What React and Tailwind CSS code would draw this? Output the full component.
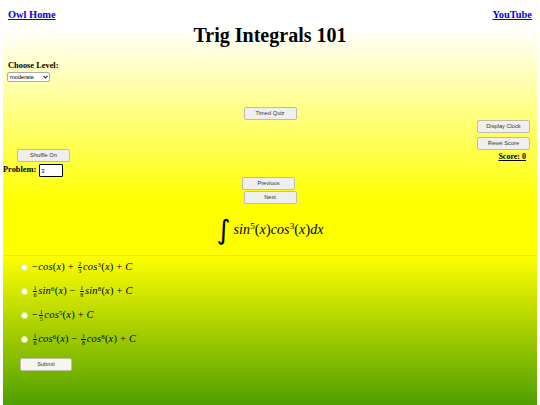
const sansFont = "font-['Liberation_Sans',sans-serif]"

function Btn({ className = '', children }) {
  return (
    <button className={`h-[11px] box-content border border-[#bdbda8] rounded-[2px] bg-[#efefef] text-[5.7px] leading-[11px] text-[#333] ${sansFont} ${className}`}>
      {children}
    </button>
  )
}

function Frac({ n, d }) {
  return (
    <span className="inline-flex flex-col items-center align-middle text-[6px] leading-[6px] mx-[1px]">
      <span className="border-b-[0.5px] border-black px-[0.5px]">{n}</span>
      <span>{d}</span>
    </span>
  )
}

function Fn({ name, sup }) {
  return (
    <>
      <i>{name}</i>
      <sup className="text-[0.65em]">{sup}</sup>
      (<i>x</i>)
    </>
  )
}

function Choice({ children }) {
  return (
    <div className="h-[24px] flex items-center gap-[4px]">
      <span className="w-[5px] h-[5px] rounded-full bg-white border border-[#e4e4a0] box-content"></span>
      <span className="text-[10.5px] tracking-[0.2px] text-black whitespace-nowrap">{children}</span>
    </div>
  )
}

export default function App() {
  return (
    <div className="w-[540px] h-[405px] overflow-hidden bg-white px-[3px]">
      <div className="h-full font-['Liberation_Serif',serif] text-black bg-[linear-gradient(180deg,#ffffff_0%,#ffffff_7%,#ffff00_50%,#ffff00_63%,#4f9f00_100%)]">
        <div className="flex justify-between pt-[9px] pl-[5px] pr-[5px] text-[10.4px] font-bold leading-[11px]">
          <a className="underline text-[#0000ee]" href="#">Owl Home</a>
          <a className="underline text-[#0000ee]" href="#">YouTube</a>
        </div>
        <h1 className="text-center text-[20px] font-bold leading-[28px] mt-[1px]">Trig Integrals 101</h1>

        <div className="pl-[5px] mt-[12px]">
          <div className="text-[8.4px] font-bold leading-[10px]">Choose Level:</div>
          <div className="relative w-[43px] h-[10px] mt-[1px] -ml-[1px]">
            <select className={`block w-full h-full appearance-none pl-[2px] text-[5.7px] bg-white border border-[#aaa] rounded-[2px] ${sansFont}`} defaultValue="moderate">
              <option>moderate</option>
            </select>
            <svg className="absolute right-[2px] top-[3px] w-[5px] h-[4px]" viewBox="0 0 10 8" fill="none" stroke="#333" strokeWidth="2.2">
              <path d="M1 2l4 4 4-4" />
            </svg>
          </div>
        </div>

        <div className="flex justify-center mt-[25px]">
          <Btn className="w-[51px]">Timed Quiz</Btn>
        </div>
        <div className="flex flex-col items-end pr-[7px] gap-[4px]">
          <Btn className="w-[51px]">Display Clock</Btn>
          <Btn className="w-[51px]">Reset Score</Btn>
        </div>

        <div className="flex -mt-[1px]">
          <div className="pl-[14px]">
            <Btn className="w-[51px] block">Shuffle On</Btn>
          </div>
          <div className="ml-auto pr-[11px] pt-[3px] text-[8px] font-bold underline leading-[10px]">Score: 0</div>
        </div>

        <div className="flex items-start text-[8.4px] font-bold mt-[2px]">
          <span className="leading-[12px]">Problem:</span>
          <input className={`ml-[3px] w-[24px] h-[13px] border border-black rounded-[1px] bg-white text-[5.7px] px-[1px] font-normal ${sansFont}`} defaultValue="3" />
        </div>

        <div className="flex flex-col items-center gap-[1px]">
          <Btn className="w-[51px] mr-[3px]">Previous</Btn>
          <Btn className="w-[51px]">Next</Btn>
        </div>

        <div className="flex items-center justify-center text-[14px] mt-[10px] h-[30px]">
          <span className="font-['DejaVu_Sans',sans-serif] text-[27px] leading-none mr-[3px]">∫</span>
          <span className="tracking-[0.1px]"><Fn name="sin" sup="5" /><Fn name="cos" sup="3" /><i>dx</i></span>
        </div>

        <div className="mt-[11px] border-t border-[#e4e43c]"></div>

        <div className="pl-[18px] -mt-[1px]">
          <Choice>−<i>cos</i>(<i>x</i>) + <Frac n="2" d="3" /><Fn name="cos" sup="3" /> + <i>C</i></Choice>
          <Choice><Frac n="1" d="6" /><Fn name="sin" sup="6" /> − <Frac n="1" d="8" /><Fn name="sin" sup="8" /> + <i>C</i></Choice>
          <Choice>−<Frac n="1" d="5" /><Fn name="cos" sup="5" /> + <i>C</i></Choice>
          <Choice><Frac n="1" d="6" /><Fn name="cos" sup="6" /> − <Frac n="1" d="8" /><Fn name="cos" sup="8" /> + <i>C</i></Choice>
          <Btn className="w-[50px] block mt-[7px] -ml-[1px] !bg-[#f6f6f0]">Submit</Btn>
        </div>
      </div>
    </div>
  )
}
